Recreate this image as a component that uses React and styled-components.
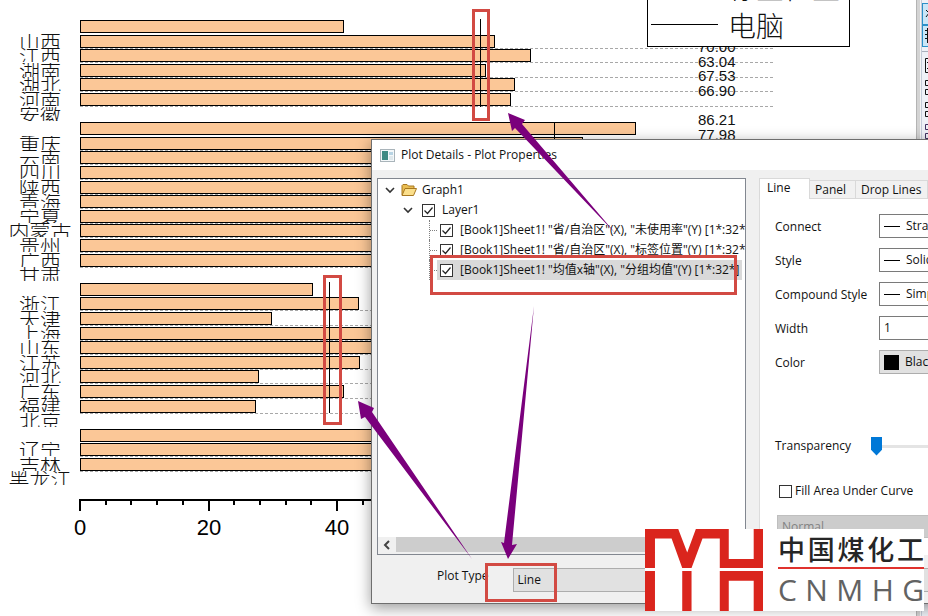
import React, { useState } from "react";
import styled, { createGlobalStyle } from "styled-components";

const UI_FONT = '"Open Sans", "Noto Sans CJK SC", sans-serif';
const CJK_FONT = '"Noto Sans CJK SC", sans-serif';

const GlobalStyle = createGlobalStyle`
  * { box-sizing: border-box; }
  body { margin: 0; background: #fff; overflow: hidden; }
`;

/* ---------- chart data ---------- */

const X0 = 80;
const ROW_TOP = 20;
const ROW_PITCH = 14.6;
const OFF = 720;
const rowY = (i) => Math.round(ROW_TOP + ROW_PITCH * i);

const bars = [
  [0, 343], [1, 494], [2, 530], [3, 485], [4, 514], [5, 510],
  [7, 635], [8, 582], [9, OFF], [10, OFF], [11, OFF], [12, OFF],
  [13, OFF], [14, OFF], [15, OFF], [16, OFF],
  [18, 312], [19, 358], [20, 271], [21, OFF], [22, OFF], [23, 359],
  [24, 258], [25, 343], [26, 255],
  [28, OFF], [29, OFF], [30, OFF],
];

const gridRows = [1, 2, 3, 4, 5, 8, 9, 10, 11, 12, 13, 14, 15, 16, 19, 20, 21, 22, 23, 24, 25, 26, 29, 30];

const provinces = [
  "", "山西", "江西", "湖南", "湖北", "河南", "安徽",
  "", "重庆", "云南", "四川", "陕西", "青海", "宁夏", "内蒙古", "贵州", "广西", "甘肃",
  "", "浙江", "天津", "上海", "山东", "江苏", "河北", "广东", "福建", "北京",
  "", "辽宁", "吉林", "黑龙江",
];

const values = [[2, "70.00"], [3, "63.04"], [4, "67.53"], [5, "66.90"], [7, "86.21"], [8, "77.98"]];
const meanLines = [[480, 19, 107], [554, 122, 150], [329, 282, 413]];
const ticks = Array.from({ length: 16 }, (_, i) => ({ x: X0 + Math.round(i * 25.7), value: i * 4, major: i % 5 === 0 }));

/* ---------- workspace ---------- */

const Workspace = styled.div`
  position: relative;
  display: flex;
  height: 100vh;
  overflow: hidden;
  background: #fff;
  color: #111;
  font: 12px/16px ${UI_FONT};
`;

const GraphPane = styled.main`
  position: relative;
  display: flex;
  flex: 1;
  min-width: 0;
`;

const ProvinceList = styled.ol`
  display: grid;
  grid-template-rows: repeat(32, 1fr);
  flex: none;
  width: 80px;
  height: 467px;
  margin: 19px 0 0;
  padding: 0;
  list-style: none;
`;

const Province = styled.li`
  height: 14px;
  overflow: hidden;
  color: #111;
  font: 300 21px/14px ${CJK_FONT};
  text-align: center;
`;

const ChartSvg = styled.svg`
  display: block;
  flex: 1;
  min-width: 0;
  height: 100%;
  overflow: visible;
`;

const ValueText = styled.text`
  font: 15px "Liberation Sans", sans-serif;
  fill: #111;
`;

const TickText = styled.text`
  font: 22px "Liberation Sans", sans-serif;
  fill: #000;
`;

const Legend = styled.div`
  position: absolute;
  left: 647px;
  top: -35px;
  display: flex;
  flex-direction: column;
  gap: 5px;
  width: 203px;
  padding: 4px 3px 5px;
  border: 1px solid #000;
  background: #fff;
`;

const LegendRow = styled.div`
  display: flex;
  align-items: center;
  gap: 10px;
  height: 33px;
  font: 300 28px/32px ${CJK_FONT};
`;

const LegendLine = styled.span`
  width: 67px;
  height: 1px;
  background: ${(p) => (p.$hidden ? "transparent" : "#000")};
`;

const Splitter = styled.div`
  width: 5px;
  background: #d4d4d4;
  border-left: 1px solid #b4b4b4;
  border-right: 1px solid #f4f4f4;
`;

const ToolStrip = styled.aside`
  display: flex;
  flex-direction: column;
  gap: 5px;
  width: 7px;
  padding-top: 3px;
  overflow: hidden;
  background: #eef1f7;
  border-left: 1px solid #c3cbd8;
`;

const ToggleGroup = styled.div`
  display: flex;
  flex-direction: column;
  padding-bottom: 4px;
  border-bottom: 1px solid #a9b0bc;
`;

const ToolButton = styled.button`
  flex: none;
  width: 22px;
  height: ${(p) => (p.$on ? 22 : 17)}px;
  padding: 0 0 0 2px;
  border: ${(p) => (p.$on ? "1px solid #2b90c8" : "0")};
  background: ${(p) => (p.$on ? "#c9e6f7" : "transparent")};
  text-align: left;
  svg { display: block; }
`;

/* ---------- dialog ---------- */

const Dialog = styled.section`
  position: absolute;
  left: 371px;
  right: -80px;
  top: 139px;
  display: flex;
  flex-direction: column;
  border: 1px solid #6e6e6e;
  background: #f0f0f0;
  box-shadow: 0 4px 14px rgba(0, 0, 0, 0.4);
`;

const TitleBar = styled.header`
  display: flex;
  align-items: center;
  gap: 6px;
  height: 30px;
  padding-left: 8px;
  background: #fff;
`;

const DialogTitle = styled.h1`
  margin: 0;
  font: inherit;
`;

const DialogBody = styled.div`
  display: grid;
  grid-template-columns: 369px 1fr;
  gap: 13px;
  height: 377px;
  margin: 8px 5px 0;
`;

const TreeBox = styled.div`
  display: flex;
  flex-direction: column;
  overflow: hidden;
  border: 1px solid #828790;
  background: #fff;
`;

const TreeList = styled.ul`
  flex: 1;
  margin: 0;
  padding: 1px 0 0;
  list-style: none;
  overflow: hidden;
`;

const TreeRow = styled.li`
  display: flex;
  align-items: center;
  height: 20px;
  padding-left: ${(p) => p.$indent}px;
  white-space: nowrap;
`;

const TreeToggle = styled.button`
  display: flex;
  width: 16px;
  padding: 0;
  border: 0;
  background: none;
`;

const Leader = styled.span`
  flex: none;
  width: ${(p) => p.$w}px;
  height: 20px;
  border-left: 1px dotted #808080;
  background: repeating-linear-gradient(90deg, #808080 0 1px, transparent 1px 2px) center / 100% 1px no-repeat;
`;

const TreeName = styled.span`
  padding-left: ${(p) => p.$gap || 5}px;
`;

const TreeLabel = styled.label`
  display: flex;
  align-items: center;
  height: 20px;
  padding: 0 3px;
  background: ${(p) => (p.$selected ? "#d9d9d9" : "transparent")};
`;

const CheckBox = styled.input`
  appearance: none;
  flex: none;
  width: 13px;
  height: 13px;
  margin: 0;
  border: 1px solid #333;
  background: #fff;
  &:checked {
    background: #fff url("data:image/svg+xml,%3Csvg xmlns='http://www.w3.org/2000/svg' viewBox='0 0 11 11'%3E%3Cpath d='M1.5 5.5l3 3 5-6' fill='none' stroke='%23222' stroke-width='1.2'/%3E%3C/svg%3E") center / 11px 11px;
  }
`;

const ScrollBar = styled.div`
  display: flex;
  height: 17px;
  padding-bottom: 2px;
  background: #f0f0f0;
`;

const ScrollButton = styled.button`
  display: grid;
  place-items: center;
  width: 18px;
  padding: 0;
  border: 0;
  background: #f0f0f0;
`;

const ScrollThumb = styled.div`
  flex: 1;
  background: #cdcdcd;
`;

const TabPane = styled.div`
  display: flex;
  flex-direction: column;
  min-width: 0;
`;

const TabList = styled.div`
  display: flex;
  align-items: flex-end;
  height: 21px;
`;

const Tab = styled.button`
  height: ${(p) => (p.$active ? 21 : 19)}px;
  padding: ${(p) => (p.$active ? "0 0 2px 7px" : "0 6px 0 5px")};
  min-width: ${(p) => (p.$active ? 51 : 46)}px;
  border: 1px solid #d9d9d9;
  border-bottom-width: ${(p) => (p.$active ? 0 : 1)}px;
  border-left-width: ${(p) => (p.$active ? 1 : 0)}px;
  background: ${(p) => (p.$active ? "#fff" : "#f1f1f1")};
  color: inherit;
  font: inherit;
  text-align: left;
  white-space: nowrap;
`;

const TabPage = styled.div`
  flex: 1;
  padding: 15px 12px 0 15px;
  border-left: 1px solid #dcdcdc;
  background: #fff;
`;

const Fields = styled.div`
  display: grid;
  grid-template-columns: 104px 1fr;
  grid-auto-rows: 24px;
  row-gap: 10px;
  align-items: center;
`;

const FieldLabel = styled.label`
  padding-top: 2px;
`;

const FieldBox = styled.div`
  display: flex;
  align-items: center;
  gap: 6px;
  height: 24px;
  padding-left: 4px;
  border: 1px solid ${(p) => (p.$grey ? "#adadad" : "#7a7a7a")};
  background: ${(p) => (p.$grey ? "#e1e1e1" : "#fff")};
`;

const LineSample = styled.span`
  width: 16px;
  height: 1px;
  background: #000;
`;

const Swatch = styled.span`
  width: 15px;
  height: 15px;
  background: #000;
`;

const PlainSelect = styled.select`
  appearance: none;
  flex: 1;
  min-width: 0;
  padding: 0;
  border: 0;
  background: transparent;
  color: inherit;
  font: inherit;
`;

const PlainInput = styled.input`
  width: 100%;
  padding: 0;
  border: 0;
  background: transparent;
  color: inherit;
  font: inherit;
`;

const SliderRow = styled.div`
  display: grid;
  grid-template-columns: 96px 1fr;
  align-items: center;
  height: 20px;
  margin-top: 62px;
`;

const Slider = styled.input`
  appearance: none;
  width: 100%;
  height: 20px;
  margin: 0;
  background: linear-gradient(#e4e4e4, #e4e4e4) center / 100% 3px no-repeat;
  &::-webkit-slider-thumb {
    appearance: none;
    width: 11px;
    height: 19px;
    background: #0078d7;
    clip-path: polygon(0 0, 100% 0, 100% 70%, 50% 100%, 0 70%);
  }
`;

const FillRow = styled.label`
  display: flex;
  align-items: center;
  gap: 3px;
  height: 18px;
  margin: 26px 0 0 4px;
`;

const ModeSelect = styled.select`
  appearance: none;
  display: block;
  width: 100%;
  height: 23px;
  margin: 15px 0 0 2px;
  padding: 0 4px;
  border: 1px solid #bfbfbf;
  background: #cccccc;
  color: #838383;
  font: inherit;
  opacity: 1;
`;

const PlotTypeRow = styled.footer`
  display: flex;
  align-items: flex-start;
  gap: 24px;
  height: 48px;
  padding: 13px 5px 0 65px;
`;

const TypeSelect = styled.select`
  appearance: none;
  flex: 1;
  height: 24px;
  padding: 0 4px;
  border: 1px solid #adadad;
  background: #e1e1e1;
  color: inherit;
  font: inherit;
`;

const Annotations = styled.svg`
  position: absolute;
  inset: 0;
  width: 100%;
  height: 100%;
  pointer-events: none;
`;

/* ---------- logo ---------- */

const Logo = styled.div`
  position: absolute;
  left: 645px;
  top: 529px;
  display: flex;
  gap: 15px;
  width: 279px;
  height: 82px;
  background: #fff;
`;

const LogoWords = styled.div`
  flex: 1;
  padding-top: 4px;
`;

const LogoLine = styled.div`
  display: flex;
  justify-content: space-between;
  height: ${(p) => (p.$latin ? 40 : 36)}px;
  border-bottom: ${(p) => (p.$latin ? "0" : "2px solid #e0322d")};
  color: ${(p) => (p.$latin ? "#626262" : "#262626")};
  font: ${(p) => (p.$latin ? '30px/42px "Open Sans", sans-serif' : `500 27px/31px ${CJK_FONT}`)};
`;

/* ---------- parts ---------- */

function Chart() {
  return (
    <ChartSvg role="img" aria-label="Bar chart by province">
      <g transform={`translate(${-X0} 0)`}>
        {gridRows.map((r) => (
          <line key={r} x1={X0} x2="774" y1={rowY(r) + 13.5} y2={rowY(r) + 13.5} stroke="#a8a8a8" strokeDasharray="3 2" />
        ))}
        {bars.map(([r, right]) => (
          <rect key={r} x={X0 + 0.5} y={rowY(r) + 0.5} width={right - X0} height="12" fill="#fbc797" stroke="#000" />
        ))}
        {meanLines.map(([x, a, b]) => (
          <line key={x} x1={x + 0.5} x2={x + 0.5} y1={a} y2={b} stroke="#000" />
        ))}
        {values.map(([r, v]) => (
          <ValueText key={r} x="698" y={rowY(r) + 3}>{v}</ValueText>
        ))}
        <path d="M79 500H600" stroke="#000" strokeWidth="2" />
        {ticks.map((t) => (
          <g key={t.x}>
            <path d={`M${t.x} 499V${t.major ? 511 : 505}`} stroke="#000" strokeWidth="2" />
            {t.major && <TickText x={t.x} y="535" textAnchor="middle">{t.value}</TickText>}
          </g>
        ))}
      </g>
    </ChartSvg>
  );
}

function Tools() {
  return (
    <ToolStrip aria-label="Graph tools">
      <ToggleGroup>
        <ToolButton $on aria-label="Rescale">
          <svg width="16" height="20" fill="none" stroke="#111"><path d="M1 6l3 3-3 4M3 9h5M5 6v8" /></svg>
        </ToolButton>
        <ToolButton $on aria-label="Axes">
          <svg width="16" height="20" fill="none" stroke="#111"><path d="M2.500 2v15M0 4.500h3M0 8.500h3M0 12.500h3M2 16.500h12" /></svg>
        </ToolButton>
      </ToggleGroup>
      <ToolButton aria-label="Layer">
        <svg width="16" height="17" fill="none" stroke="#111"><path d="M1.500 1.500h13v14h-13zM3 5.500h6v6H3" /></svg>
      </ToolButton>
      {["#111", "#111", "#403060"].map((c, i) => (
        <ToolButton key={i} aria-label={`Arrange ${i + 1}`}>
          <svg width="16" height="17" fill="none" stroke={c}><path d="M1.500 1.500h6v5h-6zM1.500 10.500h6v5h-6zM4 13.500h3" /></svg>
        </ToolButton>
      ))}
    </ToolStrip>
  );
}

function Toggle({ label }) {
  return (
    <TreeToggle aria-label={label}>
      <svg width="10" height="8" fill="none" stroke="#333" strokeWidth="1.6"><path d="M1 2l4 4 4-4" /></svg>
    </TreeToggle>
  );
}

function PlotRow({ text, selected }) {
  const [on, setOn] = useState(true);
  return (
    <TreeRow $indent={51}>
      <Leader $w={8} />
      <TreeLabel $selected={selected}>
        <CheckBox type="checkbox" checked={on} onChange={() => setOn(!on)} />
        <TreeName $gap={7}>{text}</TreeName>
      </TreeLabel>
    </TreeRow>
  );
}

function Tree() {
  const [on, setOn] = useState(true);
  return (
    <TreeBox>
      <TreeList>
        <TreeRow $indent={7}>
          <Toggle label="Collapse Graph1" />
          <svg width="16" height="14" viewBox="0 0 16 14">
            <path d="M1 12V2.500L2 1.500h4l1.500 1.500H13v3" fill="#e9bd52" stroke="#a87820" />
            <path d="M1 12.500L4 5.500h11.500L12.500 12.500z" fill="#fbdf8b" stroke="#a87820" />
          </svg>
          <TreeName>Graph1</TreeName>
        </TreeRow>
        <TreeRow $indent={25}>
          <Toggle label="Collapse Layer1" />
          <TreeLabel>
            <CheckBox type="checkbox" checked={on} onChange={() => setOn(!on)} />
            <TreeName $gap={7}>Layer1</TreeName>
          </TreeLabel>
        </TreeRow>
        <PlotRow text={'[Book1]Sheet1! "省/自治区"(X), "未使用率"(Y) [1*:32*]'} />
        <PlotRow text={'[Book1]Sheet1! "省/自治区"(X), "标签位置"(Y) [1*:32*]'} />
        <PlotRow selected text={'[Book1]Sheet1! "均值x轴"(X), "分组均值"(Y) [1*:32*]'} />
      </TreeList>
      <ScrollBar>
        <ScrollButton aria-label="Scroll left">
          <svg width="8" height="10" fill="none" stroke="#444" strokeWidth="2"><path d="M6 1L2 5l4 4" /></svg>
        </ScrollButton>
        <ScrollThumb />
      </ScrollBar>
    </TreeBox>
  );
}

function SelectField({ id, label, value }) {
  return (
    <>
      <FieldLabel htmlFor={id}>{label}</FieldLabel>
      <FieldBox>
        <LineSample />
        <PlainSelect id={id}><option>{value}</option></PlainSelect>
      </FieldBox>
    </>
  );
}

function LineSettings() {
  return (
    <TabPane>
      <TabList role="tablist">
        <Tab role="tab" aria-selected="true" $active>Line</Tab>
        <Tab role="tab">Panel</Tab>
        <Tab role="tab">Drop Lines</Tab>
        <Tab role="tab">Label</Tab>
      </TabList>
      <TabPage>
        <Fields>
          <SelectField id="connect" label="Connect" value="Straight" />
          <SelectField id="style" label="Style" value="Solid" />
          <SelectField id="compound" label="Compound Style" value="Simple" />
          <FieldLabel htmlFor="width">Width</FieldLabel>
          <FieldBox><PlainInput id="width" defaultValue="1" /></FieldBox>
          <FieldLabel htmlFor="color">Color</FieldLabel>
          <FieldBox $grey>
            <Swatch />
            <PlainSelect id="color"><option>Black</option></PlainSelect>
          </FieldBox>
        </Fields>
        <SliderRow>
          <label htmlFor="transparency">Transparency</label>
          <Slider id="transparency" type="range" defaultValue="0" />
        </SliderRow>
        <FillRow>
          <CheckBox type="checkbox" />
          Fill Area Under Curve
        </FillRow>
        <ModeSelect disabled aria-label="Fill mode"><option>Normal</option></ModeSelect>
      </TabPage>
    </TabPane>
  );
}

function PlotDetails() {
  return (
    <Dialog role="dialog" aria-labelledby="dialog-title">
      <TitleBar>
        <svg width="15" height="13" viewBox="0 0 15 13">
          <rect x="0.500" y="0.500" width="14" height="12" fill="#f4f8fa" stroke="#a9b4ba" />
          <rect x="2" y="2" width="6" height="9" fill="#3f8a84" />
          <rect x="9" y="3" width="4" height="3" fill="#b8d4e4" />
          <rect x="9" y="7" width="4" height="4" fill="#dfe8ec" />
        </svg>
        <DialogTitle id="dialog-title">Plot Details - Plot Properties</DialogTitle>
      </TitleBar>
      <DialogBody>
        <Tree />
        <LineSettings />
      </DialogBody>
      <PlotTypeRow>
        <label htmlFor="plot-type">Plot Type</label>
        <TypeSelect id="plot-type"><option>Line</option></TypeSelect>
      </PlotTypeRow>
    </Dialog>
  );
}

function Marks() {
  return (
    <Annotations aria-hidden="true">
      <g fill="none" stroke="#d24a43" strokeWidth="3">
        <rect x="473.500" y="10.500" width="15" height="109" />
        <rect x="324.500" y="276.500" width="16" height="147" />
        <rect x="431.500" y="256.500" width="304" height="37" />
        <rect x="486.500" y="564.500" width="69" height="36" />
      </g>
      <g fill="#7a007c">
        <path d="M508 113L525 120L522 124L616 234L515 128L512 131Z" />
        <path d="M534 306L504 543L501 542L508 559L517 544L512 545Z" />
        <path d="M358 401L374 408L372 412L472 559L365 417L361 419Z" />
      </g>
    </Annotations>
  );
}

function Watermark() {
  return (
    <Logo>
      <svg width="118" height="82" viewBox="0 0 355 246" fill="#da251d">
        <path d="M0 0H100L127 70L153 0H252V90H327V0H355V117H225V28H173L140 117H112L80 28H30V117H0Z" />
        <path d="M0 126H30V246H0ZM112 126H140V246H112ZM225 126H355V246H327V155H252V246H225Z" />
      </svg>
      <LogoWords>
        <LogoLine>{[..."中国煤化工"].map((c) => <span key={c}>{c}</span>)}</LogoLine>
        <LogoLine $latin>{[..."CNMHG"].map((c) => <span key={c}>{c}</span>)}</LogoLine>
      </LogoWords>
    </Logo>
  );
}

export default function App() {
  return (
    <>
      <GlobalStyle />
      <Workspace>
        <GraphPane>
          <ProvinceList>
            {provinces.map((name, i) => <Province key={i}>{name}</Province>)}
          </ProvinceList>
          <Chart />
          <Legend>
            <LegendRow><LegendLine $hidden />标签位置</LegendRow>
            <LegendRow><LegendLine />电脑</LegendRow>
          </Legend>
        </GraphPane>
        <Splitter />
        <Tools />
        <PlotDetails />
        <Marks />
        <Watermark />
      </Workspace>
    </>
  );
}
